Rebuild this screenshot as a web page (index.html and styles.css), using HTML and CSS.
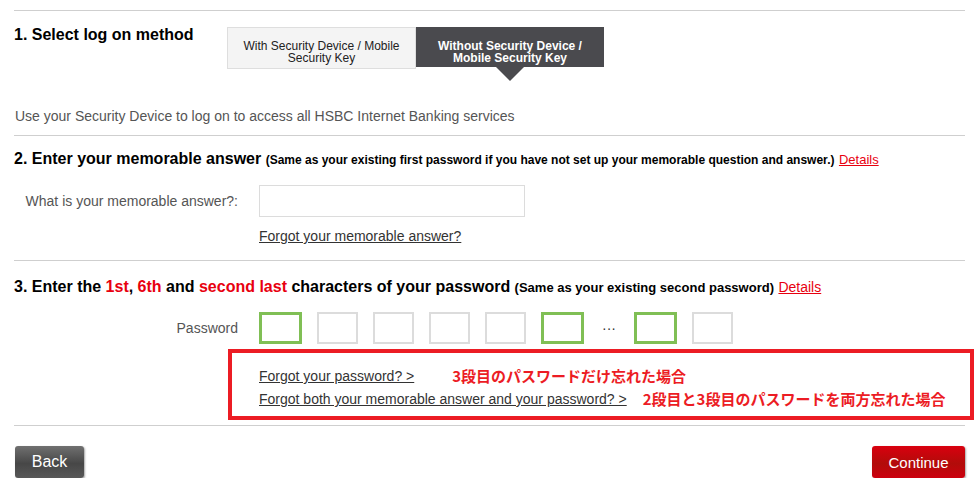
FILE: index.html
```html
<!DOCTYPE html>
<html lang="en">
<head>
    <meta charset="UTF-8">
    <title>Log on</title>
    <link rel="stylesheet" href="styles.css">
</head>
<body>
    <div id="page-container">
        <div class="step step-method">
            <h2 class="step-title method-title">1. Select log on method</h2>
            <div class="tabs">
                <div class="tab">With Security Device / Mobile<br>Security Key</div>
                <div class="tab tab-active">Without Security Device /<br>Mobile Security Key</div>
            </div>
        </div>
        <p class="intro">Use your Security Device to log on to access all HSBC Internet Banking services</p>

        <div class="step step-answer">
            <h2 class="step-title">2. Enter your memorable answer <span class="hint">(Same as your existing first password if you have not set up your memorable question and answer.)</span> <a href="#" class="details">Details</a></h2>
            <div class="field-row">
                <label for="answer">What is your memorable answer?:</label>
                <input type="text" id="answer" class="text-input">
            </div>
            <a href="#" class="forgot forgot-answer">Forgot your memorable answer?</a>
        </div>

        <div class="step step-password">
            <h2 class="step-title">3. Enter the <span class="red">1st</span>, <span class="red">6th</span> and <span class="red">second last</span> characters of your password <span class="hint hint-large">(Same as your existing second password)</span> <a href="#" class="details details-large">Details</a></h2>
            <div class="field-row">
                <label>Password</label>
                <div class="pin">
                    <input type="password" class="pin-box pin-active">
                    <input type="password" class="pin-box" disabled>
                    <input type="password" class="pin-box" disabled>
                    <input type="password" class="pin-box" disabled>
                    <input type="password" class="pin-box" disabled>
                    <input type="password" class="pin-box pin-active">
                    <span class="pin-dots">&middot;&middot;&middot;</span>
                    <input type="password" class="pin-box pin-active">
                    <input type="password" class="pin-box" disabled>
                </div>
            </div>
            <div class="note-box">
                <div class="note-row">
                    <a href="#" class="forgot">Forgot your password? &gt;</a>
                    <span class="note note-1">3段目のパスワードだけ忘れた場合</span>
                </div>
                <div class="note-row">
                    <a href="#" class="forgot">Forgot both your memorable answer and your password? &gt;</a>
                    <span class="note note-2">2段目と3段目のパスワードを両方忘れた場合</span>
                </div>
            </div>
        </div>

        <div class="actions">
            <button class="btn btn-back">Back</button>
            <button class="btn btn-continue">Continue</button>
        </div>
    </div>
</body>
</html>
```

FILE: styles.css
```css
body {
    margin: 0;
    font-family: "Liberation Sans", Arial, sans-serif;
    color: #333;
    background: #fff;
}

#page-container {
    width: 951px;
    margin-left: 14px;
    padding-top: 10px;
}

.step {
    border-top: 1px solid #cfcfcf;
}

.step-title {
    margin: 0;
    font-size: 16px;
    line-height: 20px;
    font-weight: bold;
    color: #000;
}

.red {
    color: #e8000f;
}

.hint {
    font-size: 12px;
}

.hint-large {
    font-size: 13px;
}

.details {
    font-size: 13px;
    font-weight: normal;
    color: #e8000f;
}

.details-large {
    font-size: 14px;
}

/* step 1 */
.step-method {
    display: flex;
    padding-top: 12px;
}

.method-title {
    width: 213px;
    flex-shrink: 0;
    padding-top: 2px;
}

.tabs {
    display: flex;
    align-items: flex-start;
    margin-top: 4px;
}

.tab {
    box-sizing: border-box;
    width: 189px;
    height: 42px;
    padding-top: 12px;
    border: 1px solid #dedede;
    background: #f4f4f4;
    font-size: 12px;
    line-height: 12px;
    text-align: center;
    color: #222;
}

.tab-active {
    position: relative;
    width: 188px;
    height: 40px;
    border: none;
    padding-top: 13px;
    background: #4a4a4e;
    color: #fff;
    font-weight: bold;
}

.tab-active::after {
    content: "";
    position: absolute;
    left: 80px;
    bottom: -14px;
    border-top: 14px solid #4a4a4e;
    border-left: 14px solid transparent;
    border-right: 14px solid transparent;
}

.intro {
    margin: 39px 0 11px 1px;
    font-size: 14px;
    line-height: 16px;
    color: #555;
}

/* step 2 */
.step-answer {
    padding-top: 13px;
    padding-bottom: 15px;
}

.field-row {
    display: flex;
    align-items: center;
    margin-top: 15px;
}

.field-row label {
    width: 224px;
    margin-right: 21px;
    text-align: right;
    font-size: 14px;
    color: #555;
}

.text-input {
    box-sizing: border-box;
    width: 266px;
    height: 32px;
    border: 1px solid #dcdcdc;
    margin: 0;
}

.forgot {
    font-size: 14px;
    line-height: 16px;
    color: #333;
}

.forgot-answer {
    display: inline-block;
    margin: 11px 0 0 245px;
}

/* step 3 */
.step-password {
    padding-top: 16px;
}

.step-password .field-row {
    margin-top: 14px;
}

.pin {
    display: flex;
    align-items: center;
    gap: 15px;
}

.pin-box {
    box-sizing: border-box;
    width: 41px;
    height: 32px;
    margin: 0;
    border: 2px solid #dcdcdc;
    background: #fff;
}

.pin-active {
    width: 43px;
    border: 3px solid #80bf55;
}

.pin-dots {
    width: 20px;
    text-align: center;
    font-size: 14px;
    color: #333;
}

.note-box {
    box-sizing: border-box;
    width: 746px;
    margin: 5px 0 5px 214px;
    padding: 15px 0 9px 27px;
    border: 4px solid #ec1c24;
}

.note-row {
    display: flex;
    align-items: center;
}

.note-row + .note-row {
    margin-top: 7px;
}

.note {
    font-family: "Noto Sans CJK JP", sans-serif;
    font-size: 15px;
    line-height: 16px;
    font-weight: bold;
    color: #ec1c24;
}

.note-1 {
    margin-left: 38px;
}

.note-2 {
    margin-left: 16px;
}

/* buttons */
.actions {
    display: flex;
    justify-content: space-between;
    border-top: 1px solid #cfcfcf;
    padding: 20px 0 0 1px;
}

.btn {
    height: 32px;
    border: none;
    border-radius: 3px;
    color: #fff;
    font-family: "Liberation Sans", Arial, sans-serif;
    box-shadow: 1px 1px 2px rgba(0, 0, 0, 0.35);
}

.btn-back {
    width: 69px;
    font-size: 16px;
    background: linear-gradient(#707070, #474747 55%, #585858);
}

.btn-continue {
    width: 93px;
    font-size: 15px;
    background: linear-gradient(#d9000f, #b20c0a 55%, #cc000e);
}
```
